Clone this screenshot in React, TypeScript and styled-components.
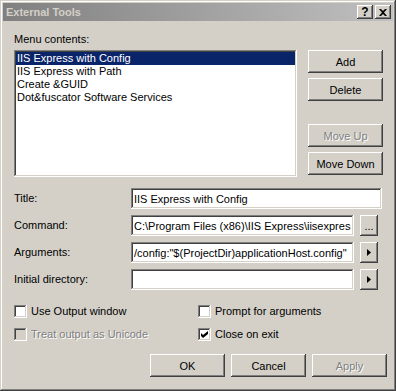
import styled, { createGlobalStyle } from "styled-components";

/**
 * Classic bevels
 */

const FACE = "#d4d0c8";

const raisedBevel = `
  box-shadow: inset -1px -1px #404040, inset 1px 1px #ffffff,
    inset -2px -2px #808080, inset 2px 2px ${FACE};
`;

const sunkenBevel = `
  box-shadow: inset -1px -1px #ffffff, inset 1px 1px #808080,
    inset -2px -2px ${FACE}, inset 2px 2px #404040;
`;

const GlobalStyle = createGlobalStyle`
  html, body {
    background: ${FACE};
    margin: 0;
    padding: 0;
  }
  body {
    color: #000000;
    font-family: "Liberation Sans", Arial, sans-serif;
    font-size: 11px;
  }
`;

/**
 * Styled Components
 */

const Window = styled.div`
  background: ${FACE};
  box-shadow: inset -1px -1px #404040, inset 1px 1px ${FACE},
    inset -2px -2px #808080, inset 2px 2px #ffffff;
  box-sizing: border-box;
  display: flex;
  flex-direction: column;
  height: 391px;
  padding: 3px;
  width: 396px;
`;

const TitleBar = styled.div`
  align-items: center;
  background: linear-gradient(to right, #808080, #c0c0c0);
  color: ${FACE};
  display: flex;
  flex: 0 0 18px;
  font-weight: bold;
  gap: 2px;
  padding: 0 2px 0 3px;
`;

const Caption = styled.span`
  flex: 1;
  line-height: 18px;
`;

const CaptionButton = styled.div`
  ${raisedBevel}
  align-items: center;
  background: ${FACE};
  color: #000000;
  display: flex;
  font-size: 12px;
  font-weight: bold;
  height: 14px;
  justify-content: center;
  line-height: 14px;
  width: 16px;
`;

const Body = styled.div`
  display: flex;
  flex-direction: column;
  padding: 12px 6px 0 11px;
`;

const Label = styled.div<{ $disabled?: boolean }>`
  color: ${({ $disabled }) => ($disabled ? "#808080" : "#000000")};
  line-height: 13px;
  text-shadow: ${({ $disabled }) => ($disabled ? "1px 1px #ffffff" : "none")};
  white-space: nowrap;
`;

const SectionLabel = styled(Label)`
  margin-bottom: 4px;
`;

const ListRow = styled.div`
  display: flex;
  gap: 11px;
`;

const ListBox = styled.div`
  ${sunkenBevel}
  background: #ffffff;
  box-sizing: border-box;
  height: 127px;
  padding: 2px;
  width: 283px;
`;

const ListItem = styled.div<{ $selected?: boolean }>`
  background: ${({ $selected }) => ($selected ? "#0a246a" : "transparent")};
  color: ${({ $selected }) => ($selected ? "#ffffff" : "#000000")};
  height: 13px;
  line-height: 13px;
  padding-left: 1px;
  white-space: nowrap;
`;

const ButtonColumn = styled.div`
  display: flex;
  flex-direction: column;
  gap: 5px;
`;

const PushButton = styled.div<{ $disabled?: boolean; $spaceBefore?: number }>`
  ${raisedBevel}
  align-items: center;
  background: ${FACE};
  box-sizing: border-box;
  color: ${({ $disabled }) => ($disabled ? "#808080" : "#000000")};
  display: flex;
  height: 23px;
  justify-content: center;
  margin-top: ${({ $spaceBefore }) => $spaceBefore ?? 0}px;
  text-shadow: ${({ $disabled }) => ($disabled ? "1px 1px #ffffff" : "none")};
  width: 75px;
`;

const FormGrid = styled.div`
  align-items: center;
  display: grid;
  grid-auto-rows: 21px;
  grid-template-columns: 117px 229px 22px;
  margin-top: 11px;
  row-gap: 6px;
`;

const TextField = styled.input<{ $wide?: boolean }>`
  ${sunkenBevel}
  background: #ffffff;
  border: none;
  box-sizing: border-box;
  color: #000000;
  font: inherit;
  grid-column: ${({ $wide }) => ($wide ? "2 / 4" : "2 / 3")};
  height: 21px;
  margin: 0;
  outline: none;
  padding: 0 3px;
  width: ${({ $wide }) => ($wide ? "251px" : "223px")};
`;

const SmallButton = styled.div`
  ${raisedBevel}
  align-items: center;
  background: ${FACE};
  display: flex;
  height: 21px;
  justify-content: center;
  width: 18px;
`;

const CheckGrid = styled.div`
  display: grid;
  grid-template-columns: 184px 1fr;
  margin-top: 15px;
  row-gap: 10px;
`;

const CheckRow = styled.div`
  align-items: center;
  display: flex;
  gap: 4px;
  height: 13px;
`;

const CheckBox = styled.div<{ $disabled?: boolean }>`
  ${sunkenBevel}
  align-items: center;
  background: ${({ $disabled }) => ($disabled ? FACE : "#ffffff")};
  box-sizing: border-box;
  display: flex;
  flex: 0 0 13px;
  height: 13px;
  justify-content: center;
`;

const Footer = styled.div`
  display: flex;
  gap: 6px;
  justify-content: flex-end;
  margin-top: 13px;
`;

/**
 * Glyphs
 */

const CloseGlyph = () => (
  <svg width="8" height="7" viewBox="0 0 8 7">
    <path d="M0 0h2l2 2 2-2h2L5 3.5 8 7H6L4 5 2 7H0l3-3.5z" fill="#000000" />
  </svg>
);

const ArrowGlyph = () => (
  <svg width="4" height="7" viewBox="0 0 4 7">
    <polygon points="0,0 4,3.5 0,7" fill="#000000" />
  </svg>
);

const CheckGlyph = () => (
  <svg width="7" height="7" viewBox="0 0 7 7">
    <path d="M0 2L2 4L7 0V3L2 7L0 5Z" fill="#000000" />
  </svg>
);

/**
 * Data
 */

const menuItems = [
  "IIS Express with Config",
  "IIS Express with Path",
  "Create &GUID",
  "Dot&fuscator Software Services",
];

/**
 * App
 */

const Check = ({
  label,
  checked,
  disabled,
}: {
  label: string;
  checked?: boolean;
  disabled?: boolean;
}) => (
  <CheckRow>
    <CheckBox $disabled={disabled}>{checked && <CheckGlyph />}</CheckBox>
    <Label $disabled={disabled}>{label}</Label>
  </CheckRow>
);

export default function App() {
  return (
    <>
      <GlobalStyle />
      <Window>
        <TitleBar>
          <Caption>External Tools</Caption>
          <CaptionButton>?</CaptionButton>
          <CaptionButton>
            <CloseGlyph />
          </CaptionButton>
        </TitleBar>
        <Body>
          <SectionLabel>Menu contents:</SectionLabel>
          <ListRow>
            <ListBox>
              {menuItems.map((item, i) => (
                <ListItem key={item} $selected={i === 0}>
                  {item}
                </ListItem>
              ))}
            </ListBox>
            <ButtonColumn>
              <PushButton>Add</PushButton>
              <PushButton>Delete</PushButton>
              <PushButton $disabled $spaceBefore={18}>
                Move Up
              </PushButton>
              <PushButton>Move Down</PushButton>
            </ButtonColumn>
          </ListRow>

          <FormGrid>
            <Label>Title:</Label>
            <TextField $wide readOnly value="IIS Express with Config" />
            <Label>Command:</Label>
            <TextField readOnly value="C:\Program Files (x86)\IIS Express\iisexpress.exe" />
            <SmallButton>...</SmallButton>
            <Label>Arguments:</Label>
            <TextField readOnly value={'/config:"$(ProjectDir)applicationHost.config"'} />
            <SmallButton>
              <ArrowGlyph />
            </SmallButton>
            <Label>Initial directory:</Label>
            <TextField readOnly value="" />
            <SmallButton>
              <ArrowGlyph />
            </SmallButton>
          </FormGrid>

          <CheckGrid>
            <Check label="Use Output window" />
            <Check label="Prompt for arguments" />
            <Check label="Treat output as Unicode" disabled />
            <Check label="Close on exit" checked />
          </CheckGrid>

          <Footer>
            <PushButton>OK</PushButton>
            <PushButton>Cancel</PushButton>
            <PushButton $disabled>Apply</PushButton>
          </Footer>
        </Body>
      </Window>
    </>
  );
}
